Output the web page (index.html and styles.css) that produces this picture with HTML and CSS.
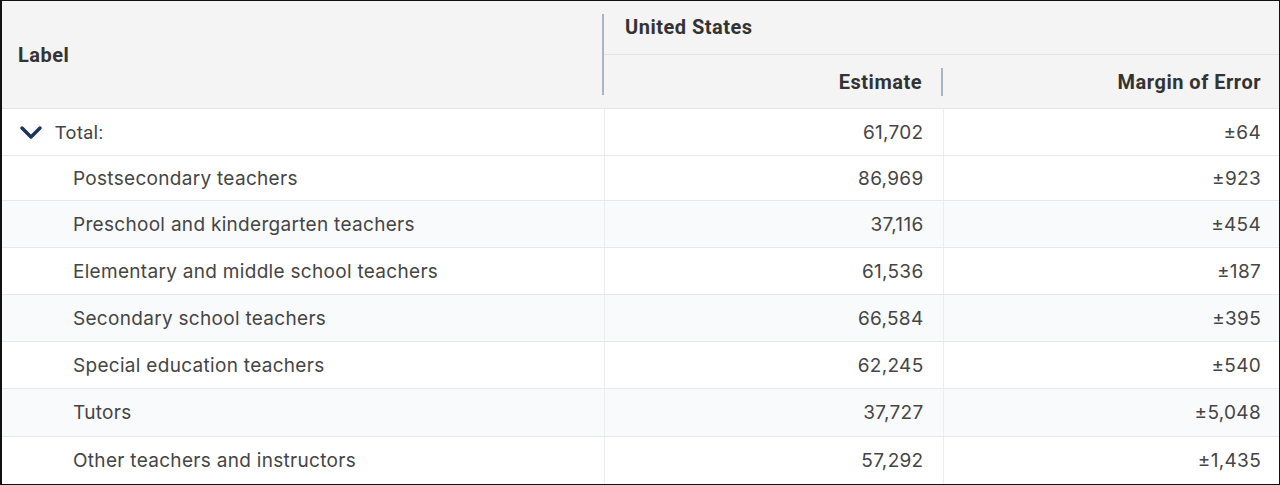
FILE: index.html
```html
<!DOCTYPE html>
<html>
<head>
<meta charset="utf-8">
<link rel="stylesheet" href="styles.css">
</head>
<body>
<div class="frame">
<table class="data">
  <colgroup>
    <col class="c-label">
    <col class="c-est">
    <col class="c-moe">
  </colgroup>
  <thead>
    <tr class="h1">
      <th rowspan="2" class="th-label"><div class="th-inner">Label</div></th>
      <th colspan="2" class="th-group"><div class="th-inner">United States</div></th>
    </tr>
    <tr class="h2">
      <th class="th-num th-est"><div class="th-inner">Estimate</div></th>
      <th class="th-num th-moe"><div class="th-inner">Margin of Error</div></th>
    </tr>
  </thead>
  <tbody>
    <tr class="total">
      <td class="lbl"><span class="chev"><svg width="24" height="15" viewBox="0 0 24 15"><path d="M3 3 L12 12 L21 3" fill="none" stroke="#1d3557" stroke-width="3.5" stroke-linecap="round" stroke-linejoin="round"/></svg></span>Total:</td>
      <td class="num">61,702</td>
      <td class="num">±64</td>
    </tr>
    <tr class="first"><td class="lbl child">Postsecondary teachers</td><td class="num">86,969</td><td class="num">±923</td></tr>
    <tr class="alt"><td class="lbl child">Preschool and kindergarten teachers</td><td class="num">37,116</td><td class="num">±454</td></tr>
    <tr><td class="lbl child">Elementary and middle school teachers</td><td class="num">61,536</td><td class="num">±187</td></tr>
    <tr class="alt"><td class="lbl child">Secondary school teachers</td><td class="num">66,584</td><td class="num">±395</td></tr>
    <tr><td class="lbl child">Special education teachers</td><td class="num">62,245</td><td class="num">±540</td></tr>
    <tr class="alt tall"><td class="lbl child">Tutors</td><td class="num">37,727</td><td class="num">±5,048</td></tr>
    <tr class="last"><td class="lbl child">Other teachers and instructors</td><td class="num">57,292</td><td class="num">±1,435</td></tr>
  </tbody>
</table>
</div>
</body>
</html>
```

FILE: styles.css
```css
html, body {
  margin: 0;
  padding: 0;
  background: #ffffff;
}

.frame {
  width: 1280px;
  height: 485px;
  box-sizing: border-box;
  border: 1px solid #111;
  border-left-width: 2px;
  overflow: hidden;
  font-family: Inter, "Noto Sans", sans-serif;
  color: #454545;
}

.data {
  width: 100%;
  border-collapse: collapse;
  table-layout: fixed;
}

.c-label { width: 602px; }
.c-est { width: 339px; }

thead th {
  background: #f4f4f4;
  font-family: Roboto, Inter, sans-serif;
  font-weight: 700;
  font-size: 20px;
  letter-spacing: 0.5px;
  color: #333;
  padding: 0;
  text-align: left;
}

.h1 th { height: 53px; }
.h2 th { height: 53px; }

.th-label {
  border-bottom: 1px solid #e3e3e3;
}
.th-label .th-inner {
  height: 81px;
  display: flex;
  align-items: center;
  padding-left: 16px;
  border-right: 2px solid #a9b6c2;
}

.th-group {
  border-bottom: 1px solid #e3e3e3;
  vertical-align: top;
}
.th-group .th-inner {
  padding: 14px 0 0 21px;
}

.th-num {
  text-align: right !important;
  border-bottom: 1px solid #e3e3e3;
}
.th-est .th-inner {
  display: flex;
  justify-content: flex-end;
  align-items: center;
  height: 28px;
  padding-right: 19px;
  border-right: 2px solid #a9b6c2;
}
.th-moe .th-inner {
  padding-right: 18px;
}

tbody td {
  height: 46px;
  padding: 0;
  font-size: 19px;
  letter-spacing: 0.3px;
  border-bottom: 1px solid #e6e8eb;
  white-space: nowrap;
}
tbody tr.first td { height: 44px; }
tbody tr.tall td { height: 47px; }
tbody tr.last td { border-bottom: none; height: 47px; }

tbody td + td {
  border-left: 1px solid #ececec;
}

tr.alt td { background: #f9fafc; }

.lbl {
  padding-left: 17px !important;
}
.lbl.child {
  padding-left: 71px !important;
}

.total .lbl {
  font-family: Roboto, Inter, sans-serif;
  letter-spacing: 0.2px;
}

.chev {
  display: inline-block;
  width: 24px;
  height: 15px;
  margin-right: 12px;
  vertical-align: -1px;
}
.chev svg { display: block; }

.num {
  text-align: right;
  padding-right: 19px !important;
}
tbody td.num:last-child {
  padding-right: 18px !important;
}
```
